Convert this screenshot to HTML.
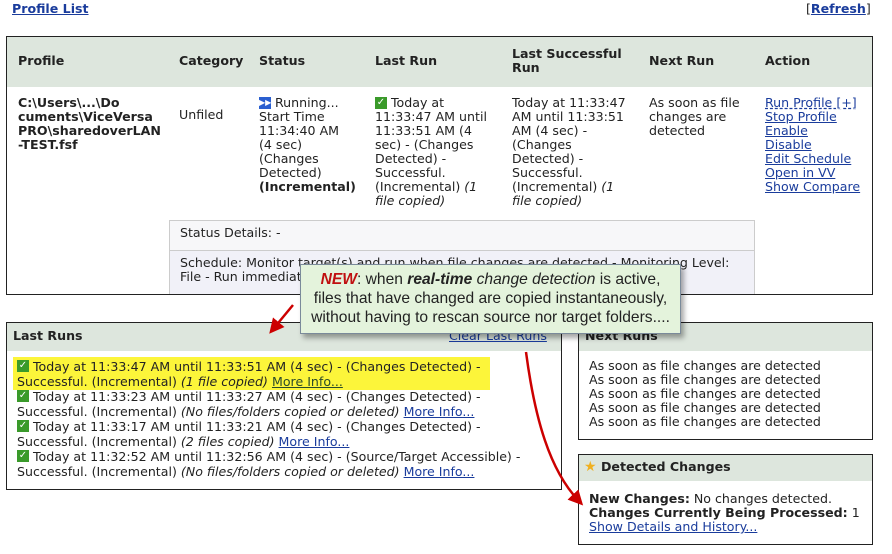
<!DOCTYPE html>
<html><head><meta charset="utf-8"><style>
*{margin:0;padding:0;box-sizing:border-box}
body{width:892px;height:554px;background:#fff;position:relative;overflow:hidden;font-family:"DejaVu Sans","Liberation Sans",sans-serif;font-size:12.6px;color:#222;line-height:14px}
.a{position:absolute;white-space:nowrap}
a{color:#1a3c9c;text-decoration:underline}
b{font-weight:bold}
.box{position:absolute;border:1px solid #222;background:#fff}
.hd{position:absolute;left:0;right:0;top:0;background:#dde6dd}
.chk{display:inline-block;width:12px;height:12px;background:#3a9a2a;color:#fff;font-size:10px;line-height:12px;text-align:center;vertical-align:top;margin-top:1px;margin-right:4px;font-weight:bold}
.play{display:inline-block;width:12px;height:12px;background:#2a5fd0;color:#fff;font-size:8px;line-height:12px;text-align:center;vertical-align:top;margin-top:1px;margin-right:4px}
.l{height:15px;line-height:15px;overflow:visible}
.l2{height:15px;line-height:15px}
i{font-style:italic}
</style></head><body>
<a class="a" style="left:12px;top:2px;font-weight:bold;font-size:12.6px">Profile List</a>
<div class="a" style="left:806px;top:2px;font-size:12.6px">[<a style="font-weight:bold">Refresh</a>]</div>

<div class="box" style="left:6px;top:36px;width:867px;height:259px">
 <div class="hd" style="height:50px"></div>
</div>
<div class="a" style="left:18px;top:54px;font-weight:bold">Profile</div>
<div class="a" style="left:179px;top:54px;font-weight:bold">Category</div>
<div class="a" style="left:259px;top:54px;font-weight:bold">Status</div>
<div class="a" style="left:375px;top:54px;font-weight:bold">Last Run</div>
<div class="a" style="left:512px;top:47px;font-weight:bold">Last Successful<br>Run</div>
<div class="a" style="left:649px;top:54px;font-weight:bold">Next Run</div>
<div class="a" style="left:765px;top:54px;font-weight:bold">Action</div>

<div class="a" style="left:18px;top:96px;font-weight:bold">C:\Users\...\Do<br>cuments\ViceVersa<br>PRO\sharedoverLAN<br>-TEST.fsf</div>
<div class="a" style="left:179px;top:108px">Unfiled</div>
<div class="a" style="left:259px;top:96px"><span class="play">▶▶</span>Running...<br>Start Time<br>11:34:40 AM<br>(4 sec)<br>(Changes<br>Detected)<br><b>(Incremental)</b></div>
<div class="a" style="left:375px;top:96px"><span class="chk">✓</span>Today at<br>11:33:47 AM until<br>11:33:51 AM (4<br>sec) - (Changes<br>Detected) -<br>Successful.<br>(Incremental) <i>(1<br>file copied)</i></div>
<div class="a" style="left:512px;top:96px">Today at 11:33:47<br>AM until 11:33:51<br>AM (4 sec) -<br>(Changes<br>Detected) -<br>Successful.<br>(Incremental) <i>(1<br>file copied)</i></div>
<div class="a" style="left:649px;top:96px">As soon as file<br>changes are<br>detected</div>
<div class="a" style="left:765px;top:96px"><a style="text-decoration:underline dashed">Run Profile [+]</a><br><a>Stop Profile</a><br><a>Enable</a><br><a>Disable</a><br><a>Edit Schedule</a><br><a>Open in VV</a><br><a>Show Compare</a></div>

<div class="a" style="left:169px;top:220px;width:586px;height:31px;background:#f7f7f9;border:1px solid #ccc"></div>
<div class="a" style="left:169px;top:250px;width:586px;height:44px;background:#f1f1f8;border:1px solid #ccc;border-bottom:none"></div>
<div class="a" style="left:180px;top:226px">Status Details: -</div>
<div class="a" style="left:180px;top:256px">Schedule: Monitor target(s) and run when file changes are detected - Monitoring Level:<br>File - Run immediately</div>

<div class="box" style="left:6px;top:322px;width:556px;height:168px"><div class="hd" style="height:28px"></div></div>
<div class="a" style="left:13px;top:329px;font-weight:bold">Last Runs</div>
<a class="a" style="left:449px;top:329px">Clear Last Runs</a>
<div class="a" style="left:13px;top:357px;width:477px;height:33px;background:#fcf53a"></div>
<div class="a" style="left:17px;top:359px">
<div class="l"><span class="chk">✓</span>Today at 11:33:47 AM until 11:33:51 AM (4 sec) - (Changes Detected) -</div>
<div class="l">Successful. (Incremental) <i>(1 file copied)</i> <a style="color:#2a4a2a">More Info...</a></div>
<div class="l"><span class="chk">✓</span>Today at 11:33:23 AM until 11:33:27 AM (4 sec) - (Changes Detected) -</div>
<div class="l">Successful. (Incremental) <i>(No files/folders copied or deleted)</i> <a>More Info...</a></div>
<div class="l"><span class="chk">✓</span>Today at 11:33:17 AM until 11:33:21 AM (4 sec) - (Changes Detected) -</div>
<div class="l">Successful. (Incremental) <i>(2 files copied)</i> <a>More Info...</a></div>
<div class="l"><span class="chk">✓</span>Today at 11:32:52 AM until 11:32:56 AM (4 sec) - (Source/Target Accessible) -</div>
<div class="l">Successful. (Incremental) <i>(No files/folders copied or deleted)</i> <a>More Info...</a></div>
</div>

<div class="box" style="left:578px;top:322px;width:295px;height:118px"><div class="hd" style="height:28px"></div></div>
<div class="a" style="left:585px;top:329px;font-weight:bold">Next Runs</div>
<div class="a" style="left:589px;top:359px">As soon as file changes are detected<br>As soon as file changes are detected<br>As soon as file changes are detected<br>As soon as file changes are detected<br>As soon as file changes are detected</div>

<div class="box" style="left:578px;top:454px;width:295px;height:91px"><div class="hd" style="height:26px"></div></div>
<div class="a" style="left:584px;top:460px;font-weight:bold"><span style="color:#f0b020;font-size:14px">★</span> Detected Changes</div>
<div class="a" style="left:589px;top:492px"><b>New Changes:</b> No changes detected.<br><b>Changes Currently Being Processed:</b> 1<br><a>Show Details and History...</a></div>

<div class="a" style="left:300px;top:264px;width:381px;height:70px;background:#e4f3dc;border:1px solid #7a8a9a;box-shadow:3px 4px 5px rgba(0,0,0,.35);font-family:'Liberation Sans',sans-serif;font-size:15.6px;line-height:19px;text-align:center;padding-top:5px;color:#222"><i style="color:#c01010;font-weight:bold">NEW</i>: when <b><i>real-time</i></b> <i>change detection</i> is active,<br>files that have changed are copied instantaneously,<br>without having to rescan source nor target folders....</div>

<svg class="a" style="left:0;top:0" width="892" height="554">
<defs><marker id="m" markerWidth="6" markerHeight="6" refX="3" refY="3" orient="auto"><path d="M0,0 L6,3 L0,6z" fill="#c00"/></marker></defs>
<path d="M293,305 L274,328" stroke="#c00" stroke-width="2.5" fill="none" marker-end="url(#m)"/>
<path d="M526,352 C535,420 550,470 578,500" stroke="#c00" stroke-width="2.5" fill="none" marker-end="url(#m)"/>
</svg>
</body></html>
